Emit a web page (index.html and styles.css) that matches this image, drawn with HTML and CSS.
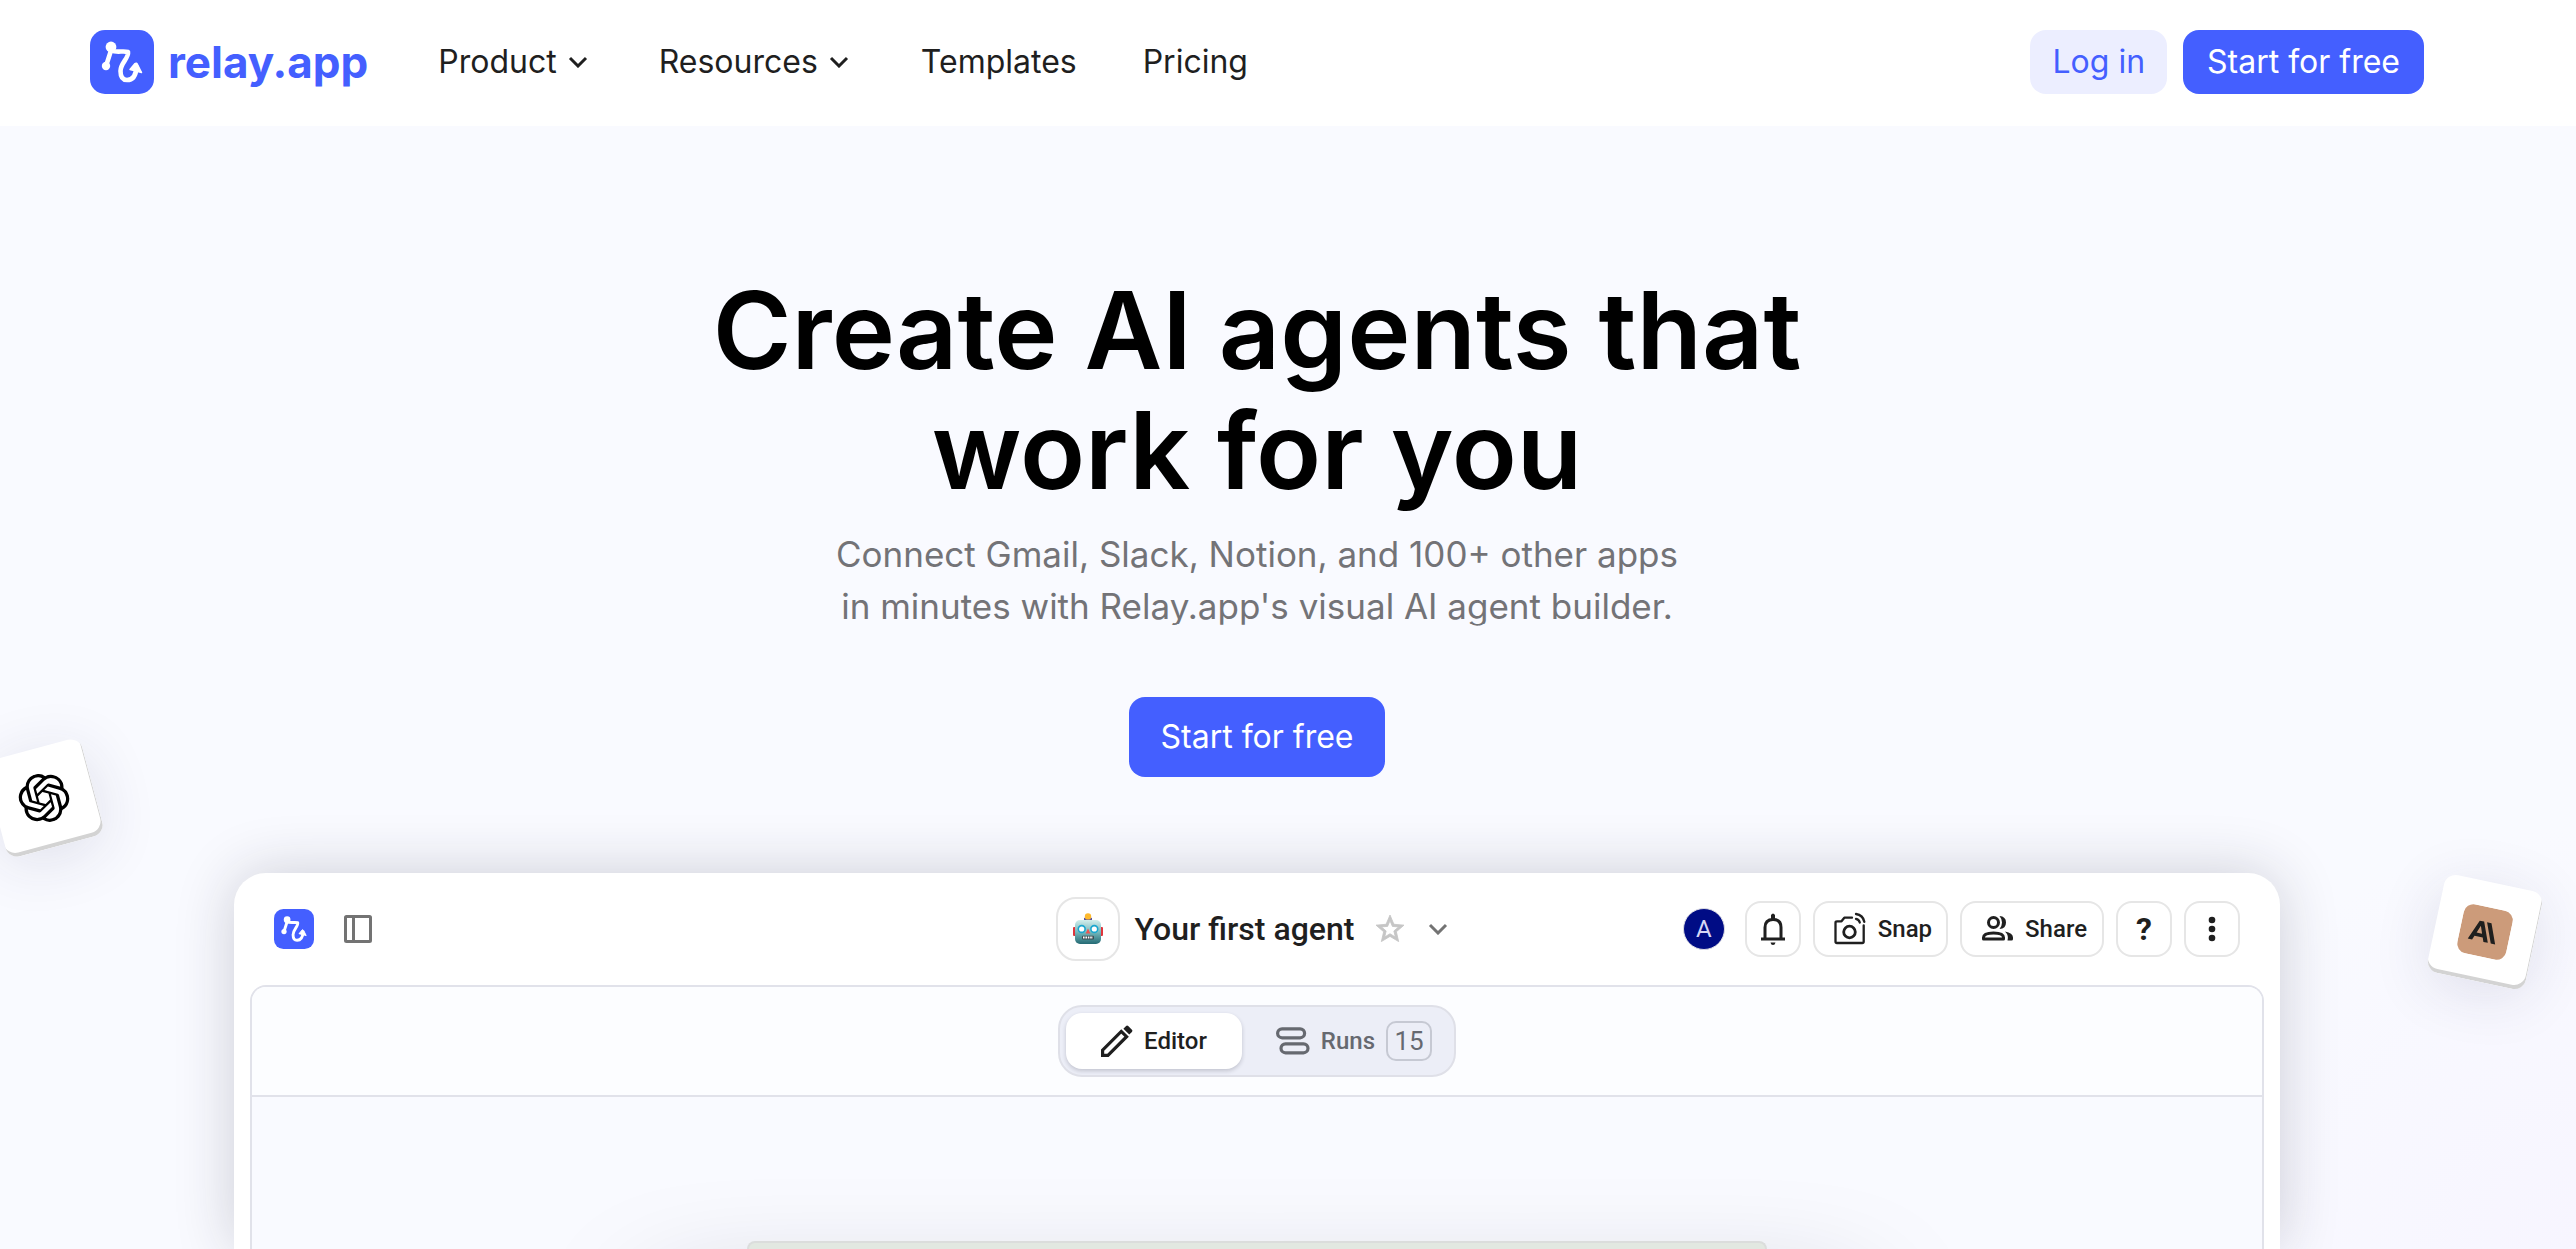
FILE: index.html
```html
<!DOCTYPE html>
<html lang="en">
<head>
<meta charset="utf-8">
<meta name="viewport" content="width=device-width, initial-scale=1">
<title>Relay.app</title>
<link rel="stylesheet" href="styles.css">
</head>
<body>
<svg class="defs" aria-hidden="true">
  <symbol id="relay" viewBox="0 0 64 64">
    <rect width="64" height="64" rx="15" fill="#445fff"/>
    <circle cx="21" cy="17" r="5.4" fill="#fff"/>
    <circle cx="16" cy="36" r="4.2" fill="#fff"/>
    <path d="M16 36 21 20.500C27 23 33 20.500 38 22 39 28 30.500 33 30.500 41 30.500 47 32.500 50 37 50 43 50 46 46 46.500 37" fill="none" stroke="#fff" stroke-width="4.600" stroke-linecap="round" stroke-linejoin="round"/>
    <path d="M40 39.500 45 33.500Q46.500 32.500 47.500 34.500L51.500 42.500 46 41Z" fill="#fff" stroke="#fff" stroke-width="1.500" stroke-linejoin="round"/>
  </symbol>
  <symbol id="chevron" viewBox="0 0 20 12">
    <path d="M2 2 10 10 18 2" fill="none" stroke="currentColor" stroke-width="3"/>
  </symbol>
</svg>

<header class="site-header">
  <a class="brand" href="#"><svg class="brand-mark" aria-hidden="true"><use href="#relay"/></svg>relay.app</a>
  <nav class="site-nav" aria-label="Main">
    <button class="nav-item" type="button">Product<svg class="chevron" aria-hidden="true"><use href="#chevron"/></svg></button>
    <button class="nav-item" type="button">Resources<svg class="chevron" aria-hidden="true"><use href="#chevron"/></svg></button>
    <a class="nav-item" href="#">Templates</a>
    <a class="nav-item" href="#">Pricing</a>
  </nav>
  <div class="account">
    <a class="btn btn-soft" href="#">Log in</a>
    <a class="btn btn-primary" href="#">Start for free</a>
  </div>
</header>

<main class="hero">
  <div class="tile tile-openai">
    <svg width="50" height="50" viewBox="0 0 24 24" role="img" aria-label="OpenAI"><path d="M22.2819 9.8211a5.9847 5.9847 0 0 0-.5157-4.9108 6.0462 6.0462 0 0 0-6.5098-2.9A6.0651 6.0651 0 0 0 4.9807 4.1818a5.9847 5.9847 0 0 0-3.9977 2.9 6.0462 6.0462 0 0 0 .7427 7.0966 5.98 5.98 0 0 0 .511 4.9107 6.051 6.051 0 0 0 6.5146 2.9001A5.9847 5.9847 0 0 0 13.2599 24a6.0557 6.0557 0 0 0 5.7718-4.2058 5.9894 5.9894 0 0 0 3.9977-2.9001 6.0557 6.0557 0 0 0-.7475-7.0729zm-9.022 12.6081a4.4755 4.4755 0 0 1-2.8764-1.0408l.1419-.0804 4.7783-2.7582a.7948.7948 0 0 0 .3927-.6813v-6.7369l2.02 1.1686a.071.071 0 0 1 .038.052v5.5826a4.504 4.504 0 0 1-4.4945 4.4944zm-9.6607-4.1254a4.4708 4.4708 0 0 1-.5346-3.0137l.142.0852 4.783 2.7582a.7712.7712 0 0 0 .7806 0l5.8428-3.3685v2.3324a.0804.0804 0 0 1-.0332.0615L9.74 19.9502a4.4992 4.4992 0 0 1-6.1408-1.6464zM2.3408 7.8956a4.485 4.485 0 0 1 2.3655-1.9728V11.6a.7664.7664 0 0 0 .3879.6765l5.8144 3.3543-2.0201 1.1685a.0757.0757 0 0 1-.071 0l-4.8303-2.7865A4.504 4.504 0 0 1 2.3408 7.872zm16.5963 3.8558L13.1038 8.364 15.1192 7.2a.0757.0757 0 0 1 .071 0l4.8303 2.7913a4.4944 4.4944 0 0 1-.6765 8.1042v-5.6772a.79.79 0 0 0-.407-.667zm2.0107-3.0231l-.142-.0852-4.7735-2.7818a.7759.7759 0 0 0-.7854 0L9.409 9.2297V6.8974a.0662.0662 0 0 1 .0284-.0615l4.8303-2.7866a4.4992 4.4992 0 0 1 6.6802 4.66zM8.3065 12.863l-2.02-1.1638a.0804.0804 0 0 1-.038-.0567V6.0742a4.4992 4.4992 0 0 1 7.3757-3.4537l-.142.0805L8.704 5.459a.7948.7948 0 0 0-.3927.6813zm1.0976-2.3654l2.602-1.4998 2.6069 1.4998v2.9994l-2.5974 1.4997-2.6067-1.4997Z"/></svg>
  </div>
  <div class="tile tile-anthropic">
    <svg width="50" height="50" viewBox="0 0 50 50" role="img" aria-label="Anthropic">
      <rect width="50" height="50" rx="10" fill="#cc9b7a"/>
      <path fill="#1f1f1e" fill-rule="evenodd" d="M17.500 15H22L30 35H25.500L23.900 30.800H15.500L13.900 35H9.500ZM19.700 19.800 16.900 27.200H22.500ZM25 15H29.500L37.500 35H33Z"/>
    </svg>
  </div>

  <h1 class="headline">Create AI agents that<br>work for you</h1>
  <p class="lead">Connect Gmail, Slack, Notion, and 100+ other apps<br>in minutes with Relay.app's visual AI agent builder.</p>
  <a class="btn btn-primary btn-large" href="#">Start for free</a>

  <section class="preview" aria-label="Agent editor">
    <div class="app-bar">
      <div class="app-left">
        <svg class="app-mark" aria-hidden="true"><use href="#relay"/></svg>
        <button class="plain" type="button" aria-label="Toggle sidebar">
          <svg width="28" height="28" viewBox="0 0 28 28" fill="none" stroke="#737373" stroke-width="3"><rect x="1.500" y="1.500" width="25" height="25" rx="1"/><path d="M9.500 1V27"/></svg>
        </button>
      </div>
      <div class="app-title">
        <span class="agent-icon">
          <svg width="30" height="32" viewBox="0 0 30 32" aria-hidden="true">
            <defs><linearGradient id="face" x1="0" y1="0" x2="0" y2="1"><stop offset="0" stop-color="#d3eeec"/><stop offset=".5" stop-color="#77b9bd"/><stop offset="1" stop-color="#246a74"/></linearGradient></defs>
            <rect x="0" y="14" width="3" height="9" rx="1" fill="#e0353c"/><rect x="27" y="14" width="3" height="9" rx="1" fill="#e0353c"/>
            <path d="M11 8V5Q15 3 19 5V8Z" fill="#5a549f"/><circle cx="15" cy="3.400" r="3.200" fill="#fdb92e"/>
            <rect x="2" y="7" width="26" height="24" rx="5" fill="url(#face)"/>
            <circle cx="8.700" cy="16" r="3.400" fill="#fff" stroke="#1aa6cf" stroke-width="1.600"/><circle cx="21.300" cy="16" r="3.400" fill="#fff" stroke="#1aa6cf" stroke-width="1.600"/>
            <path d="M15 15.500 17.300 20.500H12.700Z" fill="#ee5350"/>
            <rect x="9" y="22.800" width="12" height="3.600" rx="1" fill="#3c4b50"/><path d="M10 24.600H20" stroke="#fff" stroke-width="2" stroke-dasharray="1.600 .8"/>
          </svg>
        </span>
        <h2 class="agent-name">Your first agent</h2>
        <button class="plain star" type="button" aria-label="Favourite">
          <svg width="28" height="28" viewBox="2 2 20 20" fill="#c6c6c6" stroke="#c6c6c6" stroke-width=".6" stroke-linejoin="round"><path d="M22 9.240l-7.190-.62L12 2 9.190 8.630 2 9.240l5.460 4.730L5.820 21 12 17.270 18.180 21l-1.630-7.030L22 9.240zM12 15.400l-3.760 2.270 1-4.280-3.320-2.880 4.380-.38L12 6.100l1.710 4.040 4.380.38-3.320 2.880 1 4.280L12 15.400z"/></svg>
        </button>
        <button class="plain more" type="button" aria-label="Agent menu"><svg class="chevron" aria-hidden="true"><use href="#chevron"/></svg></button>
      </div>
      <div class="app-actions">
        <span class="avatar">A</span>
        <button class="tool square" type="button" aria-label="Notifications">
          <svg width="24" height="32" viewBox="0 0 24 32"><path d="M4 26V14.500Q4 6.500 12 6.500T20 14.500V26" fill="none" stroke="#1f1f1f" stroke-width="3"/><path d="M0 24.500H24V27.500H0ZM10 6V2Q12-1 14 2V6ZM9.500 29.500H14.500Q14 32 12 32T9.500 29.500Z" fill="#1f1f1f"/></svg>
        </button>
        <button class="tool" type="button">
          <svg width="34" height="34" viewBox="0 0 34 34" fill="none" stroke="#1f1f1f" stroke-width="2.300" stroke-linecap="round" stroke-linejoin="round"><path d="M19 5.700H11.300L8.500 9.300H4Q2.500 9.300 2.500 10.800V29.500Q2.500 31 4 31H29.200Q30.700 31 30.700 29.500V13.500"/><circle cx="16.500" cy="20" r="5.800" stroke-width="2.800"/><path d="M23 6.800Q26 7.500 26.800 10.500M23 2Q30 3 31.300 9.800"/></svg>
          Snap</button>
        <button class="tool" type="button">
          <svg width="34" height="34" viewBox="0 0 34 34"><g fill="none" stroke="#1f1f1f" stroke-width="3"><circle cx="13.500" cy="10.500" r="5"/><path d="M3.500 27V25.500Q3.500 21 13.500 21T23.500 25.500V27Z" stroke-linejoin="round"/></g><path d="M19.500 4Q26 4.500 26 10.500T19.500 17Q22 14 22 10.500T19.500 4ZM25 19.500Q33 21 33 25.500V27Q33 28.500 31.500 28.500H27.500Q29 23.500 25 19.500Z" fill="#1f1f1f"/></svg>
          Share</button>
        <button class="tool square help" type="button" aria-label="Help">?</button>
        <button class="tool square" type="button" aria-label="More">
          <svg width="8" height="26" viewBox="0 0 8 26" fill="#1f1f1f"><circle cx="4" cy="4" r="3.300"/><circle cx="4" cy="13" r="3.300"/><circle cx="4" cy="22" r="3.300"/></svg>
        </button>
      </div>
    </div>

    <div class="workspace">
      <div class="mode-bar">
        <div class="modes" role="tablist">
          <button class="mode mode-active" type="button" role="tab" aria-selected="true">
            <svg width="32" height="32" viewBox="0 0 30 30"><path d="M1.500 28.500V23.500L19 6 24 11 6.500 28.500Z" fill="none" stroke="#1f1f1f" stroke-width="3"/><path d="M21 3.500 23.500 1Q24.500 0 25.500 1L29 4.500Q30 5.500 29 6.500L26.500 9Z" fill="#1f1f1f"/></svg>
            Editor</button>
          <button class="mode" type="button" role="tab" aria-selected="false">
            <svg width="34" height="28" viewBox="0 0 34 28" fill="none" stroke="#666970" stroke-width="3.200"><rect x="1.600" y="1.800" width="27" height="9" rx="4.500"/><rect x="5" y="16.800" width="27" height="9" rx="4.500"/></svg>
            <span>Runs</span><span class="count">15</span></button>
        </div>
      </div>
      <div class="canvas"><div class="block"></div></div>
    </div>
  </section>
</main>
</body>
</html>
```
FILE: styles.css
```css
* { box-sizing: border-box; }

body {
  margin: 0;
  height: 100vh;
  display: flex;
  flex-direction: column;
  overflow: hidden;
  font-family: Inter, "Open Sans", sans-serif;
  color: #1f1f1f;
  background: #f9faff;
}

button { font: inherit; color: inherit; background: none; border: 0; padding: 0; }
a { color: inherit; text-decoration: none; }
svg { display: block; flex: none; }
.defs { position: absolute; width: 0; height: 0; }

/* Site header */
.site-header {
  flex: none;
  display: flex;
  align-items: center;
  padding: 30px 152px 32px 90px;
  background: #fff;
}
.brand {
  display: flex;
  align-items: center;
  gap: 14px;
  font-size: 44px;
  line-height: 64px;
  font-weight: 700;
  color: #445fff;
}
.brand-mark { width: 64px; height: 64px; }
.site-nav {
  display: flex;
  gap: 66px;
  margin-left: 70px;
  font-size: 32px;
  line-height: 40px;
}
.nav-item { display: flex; align-items: center; gap: 11px; }
button.nav-item { margin-right: 6px; }
.chevron { width: 20px; height: 12px; }
.account { display: flex; gap: 16px; margin-left: auto; }

.btn {
  padding: 12px 24px;
  border-radius: 16px;
  font-size: 32px;
  line-height: 40px;
}
.btn-primary { color: #fff; background: #445fff; }
.btn-soft { padding: 12px 22px; color: #445fff; background: #eceeff; }
.btn-large { padding: 20px 32px; }

/* Hero */
.hero {
  flex: 1;
  min-height: 0;
  position: relative;
  display: flex;
  flex-direction: column;
  align-items: center;
  padding: 144px 62px 0 0;
  overflow: hidden;
  background: radial-gradient(circle at 100% 100%, #f7f5ff 0, #f9faff 420px);
}
.headline {
  margin: 0;
  font-size: 107px;
  line-height: 120px;
  font-weight: 600;
  text-align: center;
  color: #000;
}
.lead {
  margin: 18px 0 66px;
  font-size: 35px;
  line-height: 52px;
  text-align: center;
  color: #737377;
}

.tile {
  position: absolute;
  display: grid;
  place-items: center;
  width: 100px;
  height: 100px;
  border-radius: 12px;
  background: #fff;
  box-shadow: inset -1px -4px 0 #d3d3d3, 0 10px 60px rgba(40, 40, 90, 0.12);
}
.tile-openai { left: -6px; top: 623px; transform: rotate(-15deg); }
.tile-anthropic { right: 41px; top: 757px; transform: rotate(12deg); }

/* App preview */
.preview {
  flex: 1;
  width: 82%;
  max-width: 2048px;
  margin-top: 96px;
  padding: 24px 16px 0;
  display: flex;
  flex-direction: column;
  border-radius: 32px 32px 0 0;
  background: #fff;
  box-shadow: 0 0 60px rgba(30, 30, 50, 0.2);
  font-family: Roboto, "Open Sans", sans-serif;
  font-size: 24px;
  line-height: 28px;
  font-weight: 500;
}
.app-bar {
  display: grid;
  grid-template-columns: 1fr auto 1fr;
  align-items: center;
  padding: 0 24px 24px;
}
.app-left { display: flex; align-items: center; gap: 30px; }
.app-mark { width: 40px; height: 40px; }
.plain { display: flex; }
.app-title { display: flex; align-items: center; }
.agent-icon {
  display: grid;
  place-items: center;
  width: 64px;
  height: 64px;
  border: 2px solid #e6e6e6;
  border-radius: 20px;
}
.agent-name { margin: 0 22px 0 15px; font-size: 32px; line-height: 40px; font-weight: 500; }
.more { padding: 0 10px 0 24px; color: #737373; }
.app-actions { display: flex; align-items: center; justify-content: flex-end; gap: 12px; }
.avatar {
  margin-right: 8px;
  width: 42px;
  border: 1px solid #dcdce4;
  border-radius: 50%;
  line-height: 40px;
  text-align: center;
  font-weight: 400;
  color: #d5d7f5;
  background: #000c85;
}
.tool {
  display: flex;
  align-items: center;
  justify-content: center;
  gap: 11px;
  height: 56px;
  padding: 0 15px 0 18px;
  border: 2px solid #e6e6e6;
  border-radius: 16px;
}
.square { width: 56px; padding: 0; }
.help { font-size: 32px; font-weight: 700; }

.workspace {
  flex: 1;
  display: flex;
  flex-direction: column;
  border: 2px solid #e1e2ea;
  border-bottom: 0;
  border-radius: 16px 16px 0 0;
  overflow: hidden;
}
.mode-bar {
  display: flex;
  justify-content: center;
  padding: 18px 0;
  border-bottom: 2px solid #e1e2ea;
  background: #fcfdff;
}
.modes {
  display: flex;
  width: 398px;
  padding: 6px;
  border: 2px solid #dfe0e8;
  border-radius: 24px;
  background: #eceef7;
}
.mode {
  flex: 1;
  display: flex;
  align-items: center;
  justify-content: flex-end;
  gap: 11px;
  height: 56px;
  padding-right: 16px;
  color: #666970;
}
.mode-active {
  flex: none;
  justify-content: center;
  width: 176px;
  padding: 0;
  border-radius: 16px;
  color: #1f1f1f;
  background: #fff;
  box-shadow: 0 2px 4px rgba(30, 30, 50, 0.2);
}
.count {
  width: 46px;
  border: 2px solid #c6c9d3;
  border-radius: 10px;
  font-size: 26px;
  line-height: 36px;
  font-weight: 400;
}
.canvas {
  flex: 1;
  display: flex;
  flex-direction: column;
  align-items: center;
  padding-top: 144px;
  background: #f9faff;
}
.block {
  flex: 1;
  width: 1020px;
  border: 2px solid #dbdddc;
  border-bottom: 0;
  border-radius: 16px 16px 0 0;
  background: #e2e8e1;
  box-shadow: 0 160px 120px 90px rgba(30, 30, 50, 0.35);
}
```
